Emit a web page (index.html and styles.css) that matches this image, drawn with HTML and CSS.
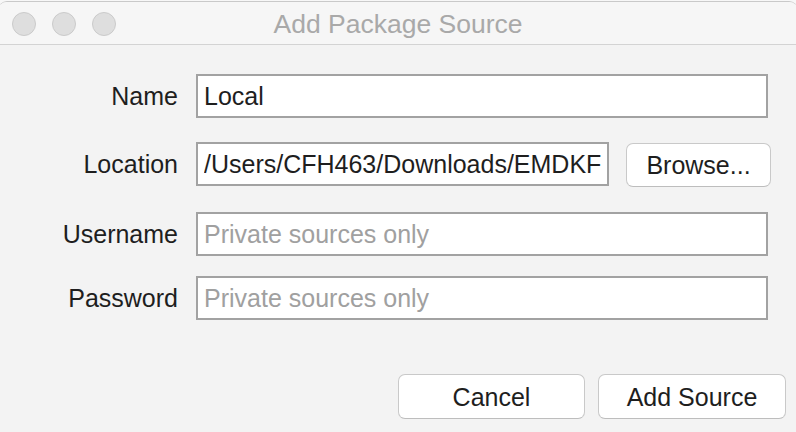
FILE: index.html
```html
<!DOCTYPE html>
<html>
<head>
<meta charset="utf-8">
<link rel="stylesheet" href="styles.css">
</head>
<body>
<div class="window">
  <div class="titlebar">
    <div class="lights">
      <span class="light"></span>
      <span class="light"></span>
      <span class="light"></span>
    </div>
    <div class="title">Add Package Source</div>
    <div class="spacer"></div>
  </div>
  <div class="form">
    <div class="row">
      <label class="label">Name</label>
      <div class="field"><input class="input input-wide" type="text" value="Local"></div>
    </div>
    <div class="row row-location">
      <label class="label">Location</label>
      <div class="field">
        <input class="input input-loc" type="text" value="/Users/CFH463/Downloads/EMDKForXamarin.nupkg">
        <button class="btn btn-browse">Browse...</button>
      </div>
    </div>
    <div class="row row-user">
      <label class="label">Username</label>
      <div class="field"><input class="input input-wide" type="text" placeholder="Private sources only"></div>
    </div>
    <div class="row row-pass">
      <label class="label">Password</label>
      <div class="field"><input class="input input-wide" type="text" placeholder="Private sources only"></div>
    </div>
  </div>
  <div class="footer">
    <button class="btn btn-cancel">Cancel</button>
    <button class="btn btn-add">Add Source</button>
  </div>
</div>
</body>
</html>
```
FILE: styles.css
```css
html, body {
  margin: 0;
  padding: 0;
  background: #f7f7f7;
  overflow: hidden;
}
body {
  width: 796px;
  height: 432px;
  font-family: "Liberation Sans", Arial, sans-serif;
  color: #222;
}
.window {
  margin: 1px -2px 0 -2px;
  height: 431px;
  background: #f3f3f3;
  border-top: 1px solid #c9c9c9;
  border-radius: 9px 9px 0 0;
  display: flex;
  flex-direction: column;
}
.titlebar {
  height: 43px;
  box-sizing: border-box;
  border-bottom: 1px solid #d3d3d3;
  background: #f6f6f6;
  border-radius: 9px 9px 0 0;
  display: grid;
  grid-template-columns: 1fr auto 1fr;
  align-items: center;
}
.lights {
  display: flex;
  gap: 16px;
  padding-left: 14px;
  margin-top: 2px;
}
.light {
  width: 24px;
  height: 24px;
  box-sizing: border-box;
  border-radius: 50%;
  background: #dedede;
  border: 1px solid #cbcbcb;
}
.title {
  font-size: 26.5px;
  color: #a9a9a9;
  margin-top: 3px;
}
.form {
  display: flex;
  flex-direction: column;
  padding: 29px 27px 0 0;
}
.row {
  display: flex;
  align-items: center;
  height: 44px;
}
.row-location { margin-top: 24px; }
.row-user { margin-top: 26px; }
.row-pass { margin-top: 20px; }
.label {
  flex: none;
  text-align: right;
  font-size: 25px;
  color: #1e1e1e;
  padding: 1px 18px 0 0;
  box-sizing: border-box;
  width: 198px;
}
.field {
  flex: 1;
  display: flex;
  gap: 17px;
  align-items: center;
  min-width: 0;
}
.input {
  height: 44px;
  box-sizing: border-box;
  border: 2px solid #a2a2a2;
  background: #fff;
  font-family: "Liberation Sans", Arial, sans-serif;
  font-size: 25px;
  color: #1e1e1e;
  padding: 1px 6px 0 6px;
  outline: none;
  margin: 0;
  min-width: 0;
}
.input::placeholder {
  color: #a0a0a0;
}
.input-wide {
  flex: 1;
  margin-right: 3px;
}
.input-loc {
  width: 413px;
  flex: none;
}
.btn {
  height: 44px;
  box-sizing: border-box;
  background: #fff;
  border: 1.5px solid #c9c9c9;
  border-bottom-color: #bdbdbd;
  border-radius: 7px;
  font-family: "Liberation Sans", Arial, sans-serif;
  font-size: 25px;
  color: #1e1e1e;
  padding: 1px 0 0 0;
  margin: 0;
}
.btn-browse {
  width: 145px;
  flex: none;
  margin-top: 2px;
}
.footer {
  display: flex;
  justify-content: flex-end;
  gap: 13px;
  padding: 54px 12px 0 0;
}
.btn-cancel {
  width: 187px;
  height: 45px;
}
.btn-add {
  width: 188px;
  height: 45px;
}
```
